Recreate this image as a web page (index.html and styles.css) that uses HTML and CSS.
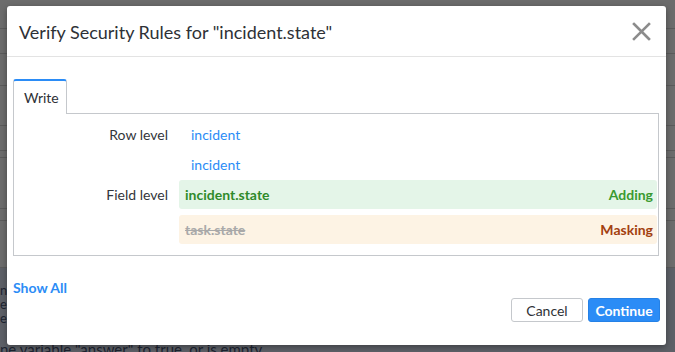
FILE: index.html
```html
<!DOCTYPE html>
<html>
<head>
<meta charset="utf-8">
<link rel="stylesheet" href="styles.css">
</head>
<body>
<div class="page">
  <div class="bg-row h29"></div>
  <div class="bg-row h25"></div>
  <div class="bg-row h32"></div>
  <div class="bg-row h40"></div>
  <div class="bg-row h25"></div>
  <div class="bg-row h7"></div>
  <div class="bg-row h51"></div>
  <div class="bg-row h12"></div>
  <div class="bg-row h47"></div>
  <div class="bg-text">
    <p>ne</p>
    <p>er</p>
    <p>e</p>
    <p class="last">ne variable "answer" to true, or is empty.</p>
  </div>
</div>

<div class="modal">
  <div class="modal-header">
    <h1 class="modal-title">Verify Security Rules for "incident.state"</h1>
    <svg class="close" width="19" height="19" viewBox="0 0 19 19"><path d="M2 2 L17 17 M17 2 L2 17" stroke="#8c8c8c" stroke-width="2.6" stroke-linecap="square"/></svg>
  </div>
  <div class="modal-body">
    <div class="tabs">
      <div class="tab">Write</div>
    </div>
    <div class="panel">
      <div class="rules">
        <div class="label">Row level</div>
        <div class="value link">incident</div>
        <div class="label"></div>
        <div class="value link">incident</div>
        <div class="label">Field level</div>
        <div class="value box add"><span class="name">incident.state</span><span class="tag">Adding</span></div>
        <div class="label"></div>
        <div class="value box mask"><span class="name">task.state</span><span class="tag">Masking</span></div>
      </div>
    </div>
  </div>
  <div class="modal-footer">
    <a class="show-all">Show All</a>
    <div class="buttons">
      <button class="btn cancel">Cancel</button>
      <button class="btn primary">Continue</button>
    </div>
  </div>
</div>
</body>
</html>
```

FILE: styles.css
```css
* { box-sizing: border-box; }
html, body { margin: 0; padding: 0; }
body {
  width: 675px;
  height: 352px;
  overflow: hidden;
  background: #6c6c6c;
  font-family: "Lato", "Source Sans Pro", "Noto Sans", sans-serif;
  position: relative;
}
.page { width: 675px; height: 352px; overflow: hidden; }
.bg-row { border-bottom: 1px solid #5b5b5b; }
.h29 { height: 29px; }
.h25 { height: 25px; }
.h32 { height: 32px; }
.h40 { height: 40px; }
.h7 { height: 7px; }
.h51 { height: 51px; }
.h12 { height: 12px; }
.h47 { height: 47px; }
.bg-text {
  background: #5d6067;
  height: 90px;
  color: #1d2431;
  font-size: 13px;
  padding-top: 15px;
}
.bg-text p { margin: 0; line-height: 14px; height: 14px; white-space: nowrap; }
.bg-text p.last { margin-top: 17px; font-size: 15px; }

.modal {
  position: absolute;
  left: 7px;
  top: 6px;
  width: 659px;
  height: 339px;
  background: #fff;
  border-radius: 3px;
  box-shadow: 0 2px 6px rgba(0,0,0,0.35);
  display: flex;
  flex-direction: column;
}
.modal-header {
  height: 51px;
  border-bottom: 1px solid #e3e3e3;
  display: flex;
  align-items: center;
  justify-content: space-between;
  padding: 0 15px 0 12px;
}
.modal-title {
  margin: 0;
  font-size: 18px;
  font-weight: 400;
  color: #2e3136;
  padding-top: 2px;
}
.close { margin-top: 1px; }

.modal-body { padding: 22px 6px 0 6px; }
.tabs { display: flex; height: 34px; }
.tab {
  width: 54px;
  height: 35px;
  border: 1px solid #c5c8cc;
  border-top: 2px solid #2b8cf6;
  border-bottom: none;
  border-radius: 3px 3px 0 0;
  background: #fff;
  font-size: 14px;
  color: #2e3136;
  padding: 8px 0 0 10px;
  position: relative;
  z-index: 1;
}
.panel {
  width: 646px;
  height: 143px;
  border: 1px solid #c5c8cc;
  padding: 6px 0 0 0;
}
.rules {
  display: grid;
  grid-template-columns: 154px 1fr;
  column-gap: 11px;
  font-size: 14px;
}
.label {
  text-align: right;
  color: #33363b;
  height: 30px;
  line-height: 30px;
}
.value { height: 30px; line-height: 30px; }
.link { color: #2b8cf6; padding-left: 12px; }
.box {
  height: 29px;
  line-height: 29px;
  border-radius: 3px;
  display: flex;
  justify-content: space-between;
  padding: 0 4px 0 6px;
  font-weight: 700;
  margin-right: 1px;
}
.add { background: #e4f5e8; color: #3a9a30; margin-bottom: 6px; }
.add .name { color: #2f8a2a; }
.mask { background: #fdf3e4; color: #a3400f; }
.mask .name { color: #a9a9a9; text-decoration: line-through; }

.modal-footer {
  padding: 22px 6px 0 6px;
  display: flex;
  flex-direction: column;
}
.show-all {
  color: #2b8cf6;
  font-size: 14px;
  font-weight: 700;
  line-height: 20px;
}
.buttons {
  display: flex;
  justify-content: flex-end;
  gap: 5px;
  margin-top: 0;
}
.btn {
  width: 72px;
  height: 24px;
  border-radius: 3px;
  font-family: inherit;
  font-size: 14px;
  padding: 0;
}
.cancel { background: #fff; border: 1px solid #c5c8cc; color: #2e3136; }
.primary { background: #2b8cf6; border: 1px solid #2581e6; color: #fff; font-weight: 700; }
```
